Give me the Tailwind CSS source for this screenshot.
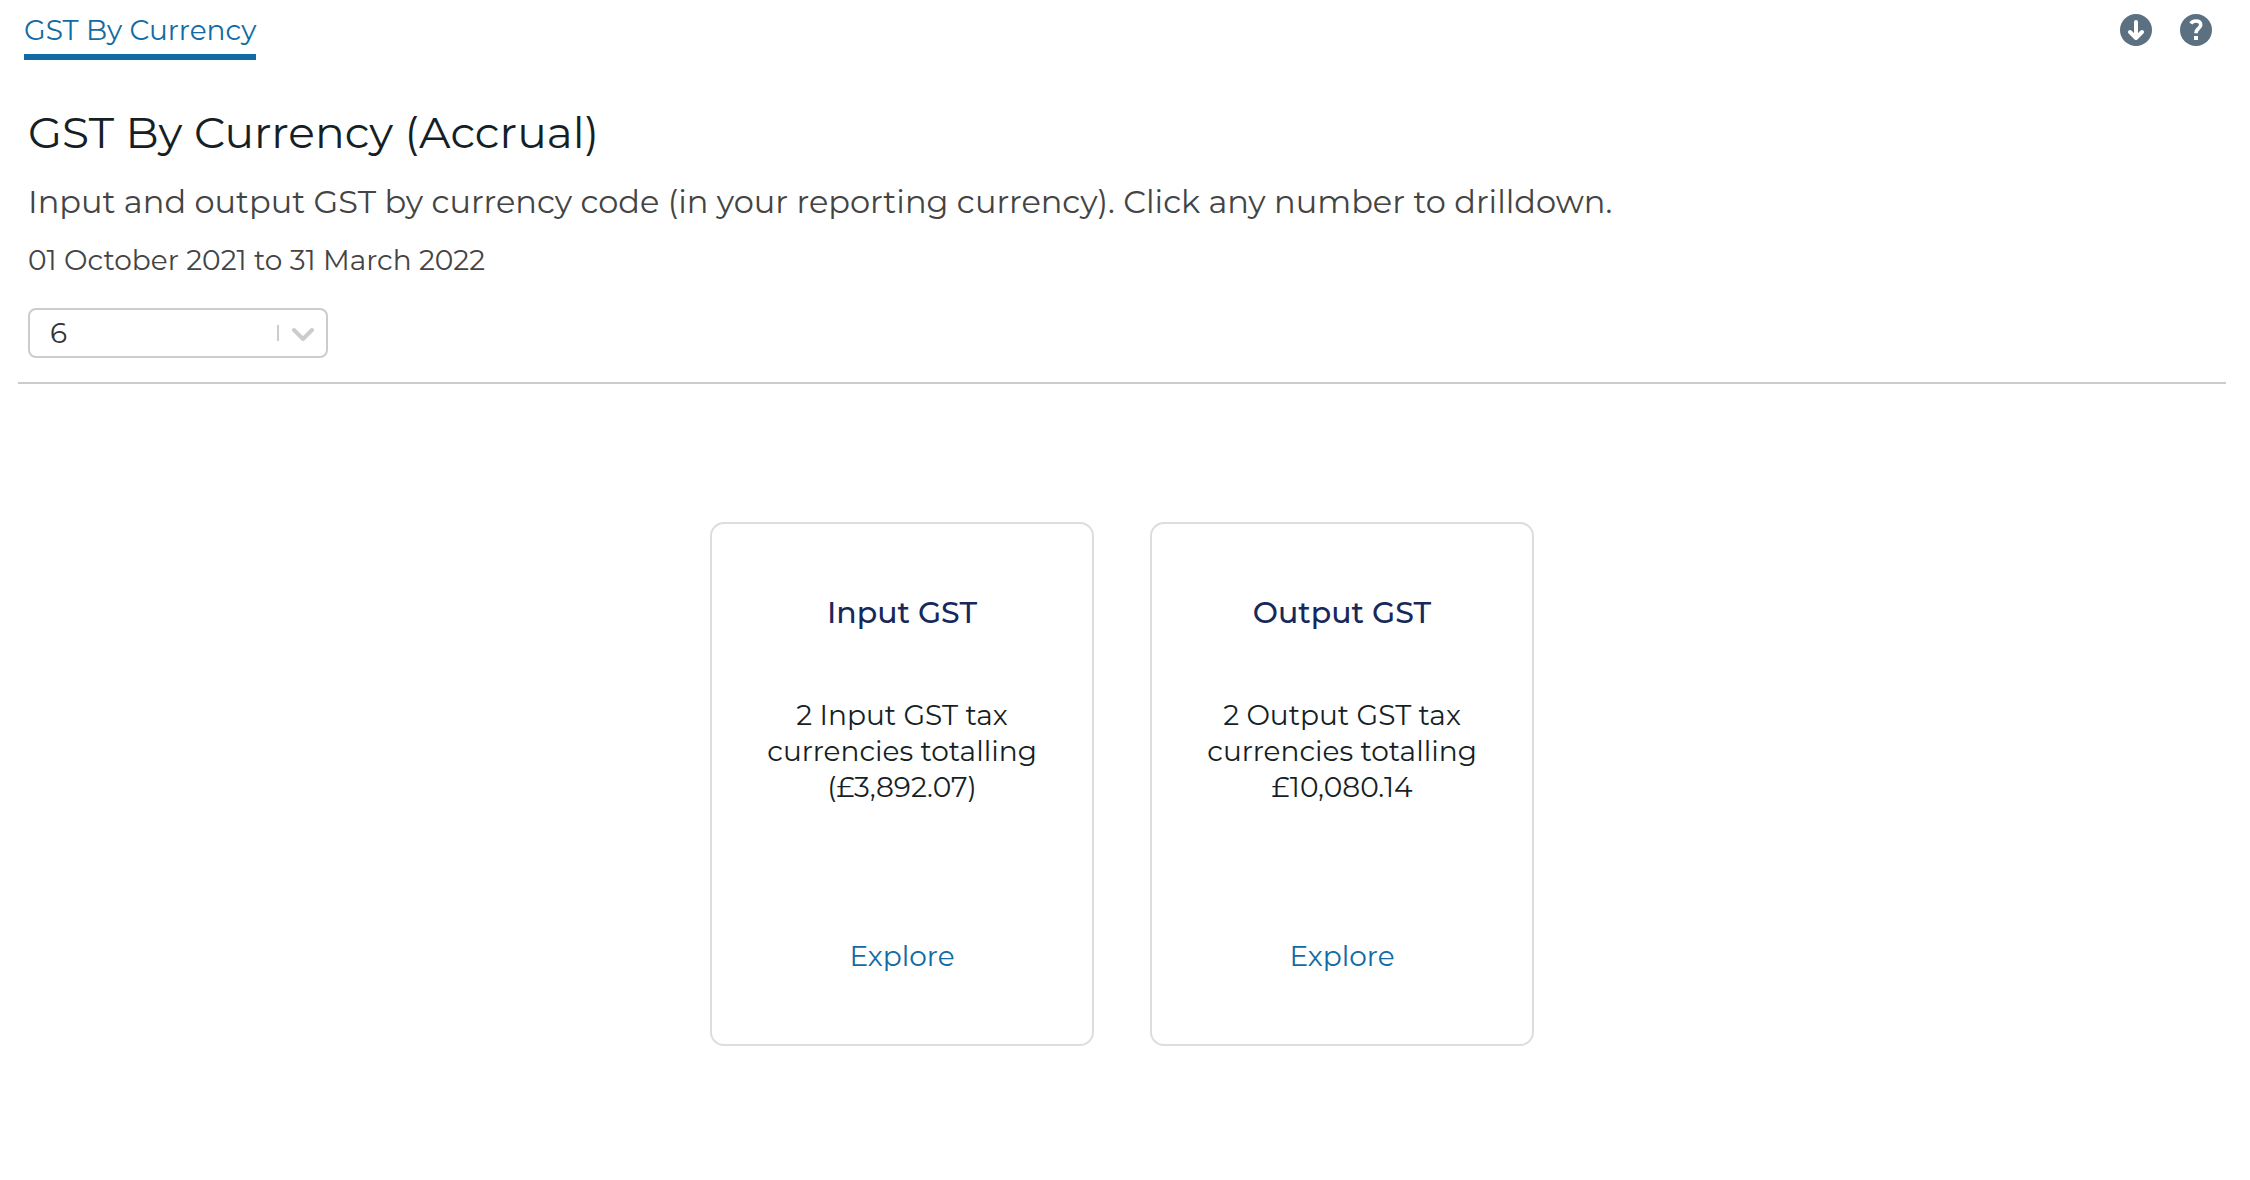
<!DOCTYPE html>
<html lang="en">
<head>
<meta charset="utf-8">
<meta name="viewport" content="width=device-width, initial-scale=1">
<title>GST By Currency</title>
<script src="https://cdn.jsdelivr.net/npm/@tailwindcss/browser@4"></script>
</head>
<body class="min-h-screen bg-white font-['Montserrat','Inter',sans-serif] text-[28px] leading-9 text-[#161f26]">
  <header class="flex items-start justify-between pl-6 pr-[38px] pt-3">
    <nav>
      <a href="#" aria-current="page" class="block border-b-6 border-[#126ba5] pb-1.5 text-[#126ba5]">GST By Currency</a>
    </nav>
    <div class="flex gap-7 pt-0.5">
      <button type="button" aria-label="Download" class="size-8">
        <svg viewBox="0 0 32 32" class="size-8" fill="none">
          <circle cx="16" cy="16" r="16" fill="#5b7080"/>
          <path d="M16 8v15M10 18l6 6 6-6" stroke="#fff" stroke-width="4" stroke-linecap="round" stroke-linejoin="round"/>
        </svg>
      </button>
      <button type="button" aria-label="Help" class="size-8">
        <svg viewBox="0 0 32 32" class="size-8" fill="none">
          <circle cx="16" cy="16" r="16" fill="#5b7080"/>
          <path d="M10.800 9.500C12 7.800 13.800 7 16 7c3 0 4.700 1.600 4.700 3.900 0 3.600-4.800 3.700-4.800 8.300" stroke="#fff" stroke-width="3.600"/>
          <path d="M14 22h4v4h-4z" fill="#fff"/>
        </svg>
      </button>
    </div>
  </header>

  <main class="pl-[18px] pr-6 pt-11">
    <section class="border-b-2 border-[#ccc] px-2.5 pb-6">
      <h1 class="text-[44px] leading-14">GST By Currency (Accrual)</h1>
      <p class="mt-[22px] text-[32px] leading-10 text-[#444]">Input and output GST by currency code (in your reporting currency). Click any number to drilldown.</p>
      <p class="mt-5 text-[#444]">01 October 2021 to 31 March 2022</p>
      <div class="relative mt-[30px] w-75">
        <select aria-label="Number of months" class="block h-[50px] w-full appearance-none rounded-lg border-2 border-[#ccc] bg-white px-5 text-[#333]">
          <option>3</option>
          <option selected>6</option>
          <option>12</option>
        </select>
        <div class="pointer-events-none absolute inset-y-0 right-[13px] flex items-center gap-3">
          <span class="h-4 w-0.5 bg-[#ccc]"></span>
          <svg viewBox="0 0 24 16" class="h-4 w-6" fill="none">
            <path d="M3 5l9 9 9-9" stroke="#ccc" stroke-width="4" stroke-linecap="round" stroke-linejoin="round"/>
          </svg>
        </div>
      </div>
    </section>

    <section class="flex flex-wrap justify-center gap-14 pb-16 pt-[138px]">
      <article class="flex min-h-131 w-96 flex-col items-center rounded-[14px] border-2 border-[#ddd] px-11 pb-[70px] pt-[71px] text-center">
        <h2 class="text-[30px] font-medium text-[#17285a]">Input GST</h2>
        <p class="mt-[66px]">2 Input GST tax currencies totalling (£3,892.07)</p>
        <a href="#" class="mt-auto text-[#126ba5]">Explore</a>
      </article>
      <article class="flex min-h-131 w-96 flex-col items-center rounded-[14px] border-2 border-[#ddd] px-11 pb-[70px] pt-[71px] text-center">
        <h2 class="text-[30px] font-medium text-[#17285a]">Output GST</h2>
        <p class="mt-[66px]">2 Output GST tax currencies totalling £10,080.14</p>
        <a href="#" class="mt-auto text-[#126ba5]">Explore</a>
      </article>
    </section>
  </main>
</body>
</html>
